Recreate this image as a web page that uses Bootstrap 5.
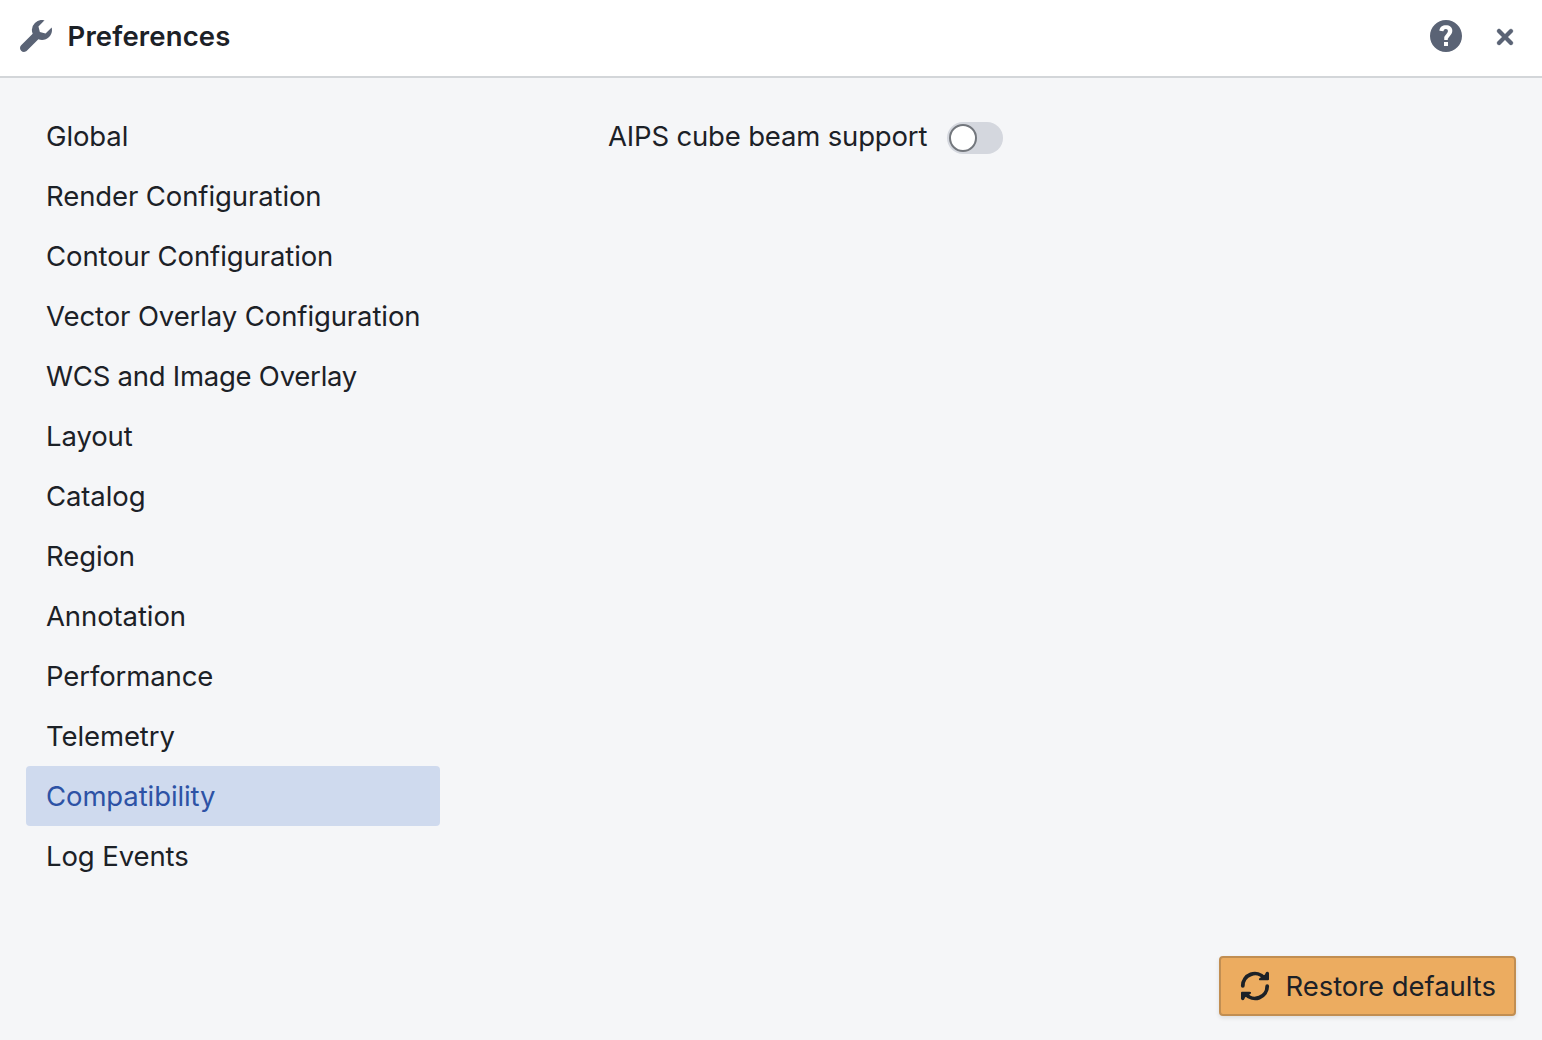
<!DOCTYPE html>
<html lang="en">
<head>
<meta charset="utf-8">
<title>Preferences</title>
<link href="https://cdn.jsdelivr.net/npm/bootstrap@5.3.0/dist/css/bootstrap.min.css" rel="stylesheet">
<style>
  body { font-family: Inter, "Liberation Sans", sans-serif; font-size: 27.5px; line-height: 36px; color: #1c2127; background: #f5f6f8; letter-spacing: -.1px; }
  .dialog-head { height: 78px; padding: 0 21px 4px 20px; border-bottom: 2px solid #d3d6d9; color: #5a6375; }
  .dialog-title { font-size: 27.5px; line-height: 36px; font-weight: 600; color: #1c2127; margin-left: 15.5px; letter-spacing: .15px; }
  .icon { width: 32px; height: 32px; fill: currentColor; flex: none; display: block; }
  .head-btn { color: #5a6375; line-height: 0; }
  .close-btn { margin-left: 27px; margin-top: 2px; }
  .dialog-main { padding: 28px 26px 0; }
  .side-tabs { width: 414px; }
  .side-tabs .nav-link { height: 60px; padding: 0 20px; line-height: 60px; color: #1c2127; border-radius: 4px; white-space: nowrap; }
  .side-tabs .nav-link.active { background: #cfdaee; color: #2d52a5; }
  .side-tabs .nav-link.tight { letter-spacing: -.25px; }
  .setting-row { margin-left: 168px; height: 60px; }
  .setting-row label { width: 320px; white-space: nowrap; letter-spacing: -.17px; }
  .setting-row .form-check-input { width: 56px; height: 32px; margin: 4px 0 0 19px; border: 0; background-color: #d4d7de; background-image: none; border-radius: 16px; padding: 2px; float: none; display: flex; }
  .setting-row .form-check-input::before { content: ""; width: 28px; height: 28px; border-radius: 50%; background: #fff; border: 2px solid #73777d; }
  .dialog-foot { padding: 0 26px 24px; }
  .restore-btn { width: 297px; height: 60px; padding: 0 18px; font-size: 27.5px; line-height: 36px; color: #1c2127; background: #ecac60; border: 2px solid #c18e52; border-radius: 4px; box-shadow: 0 2px 4px rgba(17,20,24,.1); letter-spacing: -.05px; white-space: nowrap; }
</style>
<script src="https://cdn.jsdelivr.net/npm/bootstrap@5.3.0/dist/js/bootstrap.bundle.min.js"></script>
</head>
<body>
<div class="d-flex flex-column vh-100">
  <header class="dialog-head d-flex align-items-center bg-white">
    <svg class="icon" viewBox="0 0 16 16"><path d="M15.83 3.7l-3.06 3.05-2.84-.7-.7-2.83L12.29.17a5.004 5.004 0 00-4.83 1.29 4.967 4.967 0 00-1.12 5.36L.58 12.58c-.36.36-.58.86-.58 1.41 0 1.1.9 2 2 2 .55 0 1.05-.22 1.41-.59l5.77-5.77c1.79.69 3.91.35 5.35-1.12 1.32-1.3 1.74-3.15 1.3-4.81z"/></svg>
    <h1 class="dialog-title mb-0 me-auto">Preferences</h1>
    <button class="head-btn btn p-0 border-0" aria-label="Help"><svg class="icon" viewBox="0 0 16 16"><path d="M8 0C3.58 0 0 3.58 0 8s3.58 8 8 8 8-3.58 8-8-3.58-8-8-8zm1 13H7v-2h2v2zm1.93-6.52c-.14.32-.35.64-.62.97L9.25 8.83c-.12.15-.24.29-.28.42-.04.13-.09.3-.09.52V10H7.12V8.88s.05-.51.21-.71L8.4 6.73c.22-.26.35-.49.44-.68.09-.19.12-.38.12-.58 0-.3-.1-.55-.28-.75-.18-.19-.44-.28-.76-.28-.33 0-.59.1-.78.29-.19.19-.33.46-.4.81-.03.11-.1.15-.2.14l-1.7-.25c-.12-.01-.16-.08-.14-.19.12-.82.46-1.47 1.03-1.94.57-.48 1.32-.72 2.25-.72.47 0 .9.07 1.29.22s.72.34 1 .59c.28.25.49.55.65.89.15.35.22.72.22 1.12s-.07.75-.21 1.08z"/></svg></button>
    <button class="head-btn close-btn btn p-0 border-0" aria-label="Close"><svg class="icon" viewBox="0 0 16 16"><path d="M9.41 8l2.29-2.29c.19-.18.3-.43.3-.71a1.003 1.003 0 00-1.71-.71L8 6.59l-2.29-2.3a1.003 1.003 0 00-1.42 1.42L6.59 8 4.3 10.29c-.19.18-.3.43-.3.71a1.003 1.003 0 001.71.71L8 9.41l2.29 2.29c.18.19.43.3.71.3a1.003 1.003 0 00.71-1.71L9.41 8z" stroke="currentColor" stroke-width=".15"/></svg></button>
  </header>
  <main class="dialog-main d-flex flex-grow-1">
    <nav class="side-tabs nav nav-pills flex-column flex-nowrap">
      <a class="nav-link">Global</a>
      <a class="nav-link">Render Configuration</a>
      <a class="nav-link">Contour Configuration</a>
      <a class="nav-link">Vector Overlay Configuration</a>
      <a class="nav-link tight">WCS and Image Overlay</a>
      <a class="nav-link">Layout</a>
      <a class="nav-link">Catalog</a>
      <a class="nav-link">Region</a>
      <a class="nav-link">Annotation</a>
      <a class="nav-link">Performance</a>
      <a class="nav-link">Telemetry</a>
      <a class="nav-link active">Compatibility</a>
      <a class="nav-link">Log Events</a>
    </nav>
    <div class="setting-row form-check form-switch d-flex align-items-center p-0">
      <label for="aips">AIPS cube beam support</label>
      <input class="form-check-input" type="checkbox" role="switch" id="aips">
    </div>
  </main>
  <footer class="dialog-foot d-flex justify-content-end">
    <button class="restore-btn btn d-flex align-items-center justify-content-between">
      <svg class="icon" viewBox="0 0 16 16"><path d="M1.9 7.9A6.1 6.1 0 0 1 12.6 3.9M14.1 8.1A6.1 6.1 0 0 1 3.4 12.1" fill="none" stroke="currentColor" stroke-width="1.9" stroke-linecap="round"/><path d="M15 1.6v3q0 .5-.5.5H10.8q-1.3 0-.6-1L13 2.3l.3-.8q.3-.6.9-.6t.8.7zM1 14.4v-3q0-.5.5-.5H5.2q1.300 0 .6 1L3 13.700l-.3.8q-.3.6-.9.6t-.8-.7z"/></svg>
      <span>Restore defaults</span>
    </button>
  </footer>
</div>
</body>
</html>
